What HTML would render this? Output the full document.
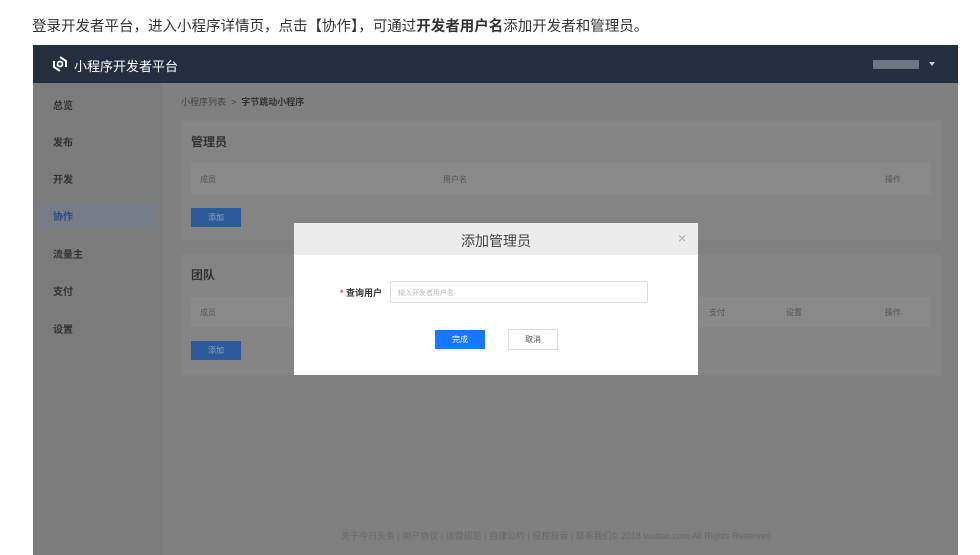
<html><head><style>
body{margin:0;width:980px;height:555px;background:#fff;font-family:"Liberation Sans","Noto Sans CJK SC",sans-serif;position:relative;overflow:hidden}
.a{position:absolute}
.t{font-size:10px;color:#555;font-weight:bold}
</style></head><body>
<div class="a" style="left:32px;top:15px;font-size:14.5px;color:#333">登录开发者平台，进入小程序详情页，点击【协作】，可通过<b>开发者用户名</b>添加开发者和管理员。</div>
<div class="a" style="left:33px;top:45px;width:925px;height:510px;background:#808080">
 <div class="a" style="left:0;top:0;width:925px;height:38px;background:#232f40"></div>
 <svg class="a" style="left:18px;top:10px" width="18" height="18" viewBox="0 0 18 18"><path d="M9 2 L15 6 L15 12 M9 16 L3 12 L3 6" stroke="#fff" stroke-width="2" fill="none"/><circle cx="9" cy="9" r="2.5" stroke="#fff" stroke-width="1.8" fill="none"/></svg>
 <div class="a" style="left:41px;top:11px;color:#fff;font-size:13px">小程序开发者平台</div>
 <div class="a" style="left:840px;top:15px;width:46px;height:9px;background:#6d7684"></div>
 <div class="a" style="left:896px;top:17px;border:3px solid transparent;border-top:4px solid #ccc"></div>
 <div class="a" style="left:0;top:38px;width:129px;height:472px;background:#7b7b7b"></div>
 <div class="a" style="left:7px;top:157px;width:115px;height:25px;background:#767b85"></div>
 <div class="a t" style="left:20px;top:52px;color:#333">总览</div>
 <div class="a t" style="left:20px;top:89px;color:#333">发布</div>
 <div class="a t" style="left:20px;top:126px;color:#333">开发</div>
 <div class="a t" style="left:20px;top:163px;color:#2a4a85">协作</div>
 <div class="a t" style="left:20px;top:201px;color:#333">流量主</div>
 <div class="a t" style="left:20px;top:238px;color:#333">支付</div>
 <div class="a t" style="left:20px;top:276px;color:#333">设置</div>
 <div class="a" style="left:148px;top:50px;font-size:9px;color:#444">小程序列表 &nbsp;&gt;&nbsp; <b style="color:#333">字节跳动小程序</b></div>
 <div class="a" style="left:148px;top:76px;width:760px;height:119px;background:#848484"></div>
 <div class="a" style="left:158px;top:88px;font-size:12px;color:#333;font-weight:bold">管理员</div>
 <div class="a" style="left:158px;top:118px;width:740px;height:32px;background:#898989"></div>
 <div class="a" style="left:167px;top:129px;font-size:8px;color:#555">成员</div>
 <div class="a" style="left:410px;top:129px;font-size:8px;color:#555">用户名</div>
 <div class="a" style="left:852px;top:129px;font-size:8px;color:#555">操作</div>
 <div class="a" style="left:158px;top:163px;width:50px;height:19px;background:#2d5a9b;color:#8aa;font-size:8px;text-align:center;line-height:19px">添加</div>
 <div class="a" style="left:148px;top:209px;width:760px;height:121px;background:#848484"></div>
 <div class="a" style="left:158px;top:221px;font-size:12px;color:#333;font-weight:bold">团队</div>
 <div class="a" style="left:158px;top:252px;width:740px;height:30px;background:#898989"></div>
 <div class="a" style="left:167px;top:262px;font-size:8px;color:#555">成员</div>
 <div class="a" style="left:676px;top:262px;font-size:8px;color:#555">支付</div>
 <div class="a" style="left:753px;top:262px;font-size:8px;color:#555">设置</div>
 <div class="a" style="left:852px;top:262px;font-size:8px;color:#555">操作</div>
 <div class="a" style="left:158px;top:296px;width:50px;height:19px;background:#2d5a9b;color:#8aa;font-size:8px;text-align:center;line-height:19px">添加</div>
 <div class="a" style="left:308px;top:484px;font-size:9px;color:#6a6a6a">关于今日头条 | 用户协议 | 运营规范 | 自律公约 | 侵权投诉 | 联系我们© 2018 toutiao.com All Rights Reserved</div>
</div>
<div class="a" style="left:294px;top:223px;width:404px;height:152px;background:#fff">
 <div class="a" style="left:0;top:0;width:404px;height:32px;background:#ececec"></div>
 <div class="a" style="left:0;top:8px;width:404px;text-align:center;font-size:14px;color:#444">添加管理员</div>
 <div class="a" style="left:384px;top:7px;font-size:14px;color:#aaa">×</div>
 <div class="a" style="left:46px;top:63px;font-size:9px;color:#333;font-weight:bold"><span style="color:#e55">*</span> 查询用户</div>
 <div class="a" style="left:96px;top:58px;width:256px;height:20px;border:1px solid #ddd;border-radius:2px"></div>
 <div class="a" style="left:104px;top:65px;font-size:7px;color:#bbb">输入开发者用户名</div>
 <div class="a" style="left:141px;top:107px;width:50px;height:19px;background:#1677ff;color:#fff;font-size:8px;text-align:center;line-height:19px">完成</div>
 <div class="a" style="left:214px;top:106px;width:48px;height:19px;border:1px solid #ddd;color:#555;font-size:8px;text-align:center;line-height:19px">取消</div>
</div>
</body></html>
